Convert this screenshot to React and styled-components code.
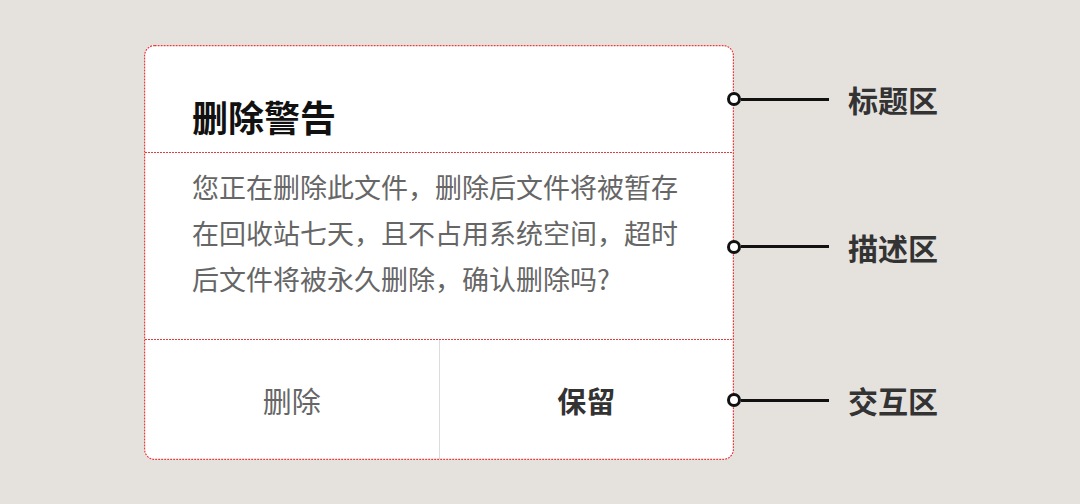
import React from 'react'
import styled, { createGlobalStyle } from 'styled-components'

const GlobalStyle = createGlobalStyle`
    body {
        margin: 0;
        background: #e5e2de;
        font-family: "Noto Sans CJK SC", "Noto Sans", sans-serif;
    }
`

const GUIDE = '#e23d3f'
const CARD_W = 590
const CARD_H = 415

const Page = styled.div`
    height: 504px;
    padding: 45px 0 0 144px;
    box-sizing: border-box;
    background: #e5e2de;
`

const Layout = styled.div`
    display: grid;
    grid-template-columns: ${CARD_W}px auto;
    grid-template-rows: 108px 187px 120px;
`

const Dialog = styled.div`
    grid-column: 1;
    grid-row: 1 / span 3;
    position: relative;
    display: flex;
    flex-direction: column;
    padding: 1px;
    background: #fff;
    border-radius: 10px;
    box-sizing: border-box;
    height: ${CARD_H}px;
`

// dashed red guide drawn over the card edge
const Frame = styled.svg`
    position: absolute;
    inset: 0;
    pointer-events: none;
`

const Divider = styled.div`
    height: 1px;
    flex: none;
    background: repeating-linear-gradient(90deg, ${GUIDE} 0 2px, transparent 2px 3px);
`

const Header = styled.div`
    height: 106px;
    box-sizing: border-box;
    padding: 50px 47px 0;
`

const Title = styled.h2`
    margin: 0;
    font-size: 36px;
    line-height: 40px;
    font-weight: 700;
    color: #111;
`

const Body = styled.div`
    height: 186px;
    box-sizing: border-box;
    padding: 11px 47px 0;
`

const Message = styled.p`
    margin: 0;
    font-size: 27px;
    line-height: 46px;
    color: #666;
`

const Actions = styled.div`
    flex: 1;
    display: flex;
`

const ActionButton = styled.button`
    flex: 1;
    border: none;
    border-right: ${p => (p.$last ? 'none' : '1px solid #dcdcdc')};
    background: transparent;
    font-family: inherit;
    font-size: 29px;
    font-weight: ${p => (p.$primary ? 700 : 400)};
    color: ${p => (p.$primary ? '#333' : '#666')};
    padding: 0;
    cursor: pointer;
`

const Note = styled.div`
    grid-column: 2;
    grid-row: ${p => p.$row};
    align-self: center;
    display: flex;
    align-items: center;
    margin-left: -7px;
`

const Dot = styled.span`
    width: 14px;
    height: 14px;
    box-sizing: border-box;
    border: 3px solid #111;
    border-radius: 50%;
    background: #fff;
    position: relative;
    z-index: 1;
`

const Line = styled.span`
    width: 88px;
    height: 3px;
    background: #111;
`

const NoteText = styled.span`
    margin-left: 19px;
    font-size: 30px;
    font-weight: 700;
    color: #333;
`

const notes = ['标题区', '描述区', '交互区']

export default function App() {
    return (
        <Page>
            <GlobalStyle />
            <Layout>
                <Dialog>
                    <Header>
                        <Title>删除警告</Title>
                    </Header>
                    <Divider />
                    <Body>
                        <Message>
                            您正在删除此文件，删除后文件将被暂存在回收站七天，且不占用系统空间，超时后文件将被永久删除，确认删除吗?
                        </Message>
                    </Body>
                    <Divider />
                    <Actions>
                        <ActionButton>删除</ActionButton>
                        <ActionButton $primary $last>保留</ActionButton>
                    </Actions>
                    <Frame width={CARD_W} height={CARD_H}>
                        <rect
                            x="0.6"
                            y="0.6"
                            width={CARD_W - 1.2}
                            height={CARD_H - 1.2}
                            rx="10"
                            fill="none"
                            stroke={GUIDE}
                            strokeWidth="1.2"
                            strokeDasharray="2 1"
                        />
                    </Frame>
                </Dialog>
                {notes.map((text, i) => (
                    <Note key={text} $row={i + 1}>
                        <Dot />
                        <Line />
                        <NoteText>{text}</NoteText>
                    </Note>
                ))}
            </Layout>
        </Page>
    )
}
